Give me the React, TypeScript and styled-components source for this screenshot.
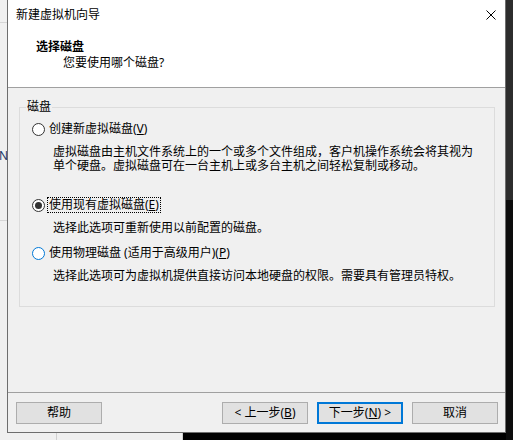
import styled, { createGlobalStyle } from 'styled-components';

const GlobalStyle = createGlobalStyle`
  html, body {
    margin: 0;
    padding: 0;
    background: #000;
  }
  body {
    font-family: "Noto Sans", "Noto Sans CJK SC", sans-serif;
    font-size: 12px;
    color: #000;
  }
`;

const Desktop = styled.div`
  width: 513px;
  height: 440px;
  overflow: hidden;
  display: grid;
  grid-template-columns: 7px 499px 7px;
  grid-template-rows: 433px 7px;
`;

const LeftStrip = styled.div`
  display: flex;
  flex-direction: column;
  background: #f0f0f0;
  overflow: hidden;
`;

const StripCell = styled.div<{ $h: number }>`
  height: ${({ $h }) => $h}px;
  flex-shrink: 0;
  border-bottom: 1px solid #d6d6d6;
  box-sizing: border-box;
`;

const BehindGlyph = styled.div`
  margin-top: 126px;
  margin-left: -1px;
  font-size: 12px;
  line-height: 14px;
  color: #1c3766;
`;

const RightStrip = styled.div`
  grid-row: 1 / 3;
  grid-column: 3;
  display: flex;
  flex-direction: column;
  background: #0c0c0c;
`;

const RightTop = styled.div`
  height: 200px;
  background: #2d2d2d;
`;

const BottomStrip = styled.div`
  grid-column: 1 / 3;
  display: flex;
  background: #000;
`;

const BottomLight = styled.div<{ $w: number }>`
  width: ${({ $w }) => $w}px;
  background: #f0f0f0;
  border-right: 1px solid #d0d0d0;
  box-sizing: border-box;
`;

const Window = styled.div`
  display: flex;
  flex-direction: column;
  border: 1px solid #6e6e6e;
  border-top: none;
  background: #f0f0f0;
  box-sizing: border-box;
`;

const Header = styled.div`
  background: #fff;
  border-bottom: 1px solid #a0a0a0;
  height: 88px;
  box-sizing: border-box;
  display: flex;
  flex-direction: column;
`;

const TitleBar = styled.div`
  height: 30px;
  display: flex;
  align-items: center;
  justify-content: space-between;
  padding: 0 9px 0 8px;
`;

const TitleText = styled.span`
  line-height: 14px;
`;

const CloseIcon = () => (
  <svg width="10" height="10" viewBox="0 0 10 10">
    <path d="M0.5 0.5L9.5 9.5M9.5 0.5L0.5 9.5" stroke="#000" strokeWidth="1" fill="none" />
  </svg>
);

const PageTitle = styled.div`
  margin: 9px 0 0 28px;
  font-weight: 700;
  line-height: 16px;
`;

const PageSubtitle = styled.div`
  margin: 0 0 0 55px;
  line-height: 16px;
`;

const Body = styled.div`
  height: 305px;
  box-sizing: border-box;
  border-bottom: 1px solid #a0a0a0;
  padding-top: 12px;
`;

const GroupBox = styled.fieldset`
  margin: 0 10px 0 11px;
  padding: 8px 12px 23px 12px;
  border: 1px solid #dcdcdc;
  min-width: 0;
`;

const Legend = styled.legend`
  padding: 0 1px;
  margin-left: -6px;
  line-height: 14px;
`;

const Option = styled.div<{ $top: number }>`
  margin-top: ${({ $top }) => $top}px;
`;

const RadioRow = styled.div`
  display: flex;
  align-items: center;
  gap: 3px;
  height: 14px;
`;

const Radio = styled.span<{ $checked?: boolean; $hot?: boolean }>`
  width: 13px;
  height: 13px;
  box-sizing: border-box;
  border-radius: 50%;
  border: 1px solid ${({ $hot }) => ($hot ? '#0078d7' : '#333')};
  background: #fff;
  display: flex;
  align-items: center;
  justify-content: center;
  flex-shrink: 0;

  &::after {
    content: '';
    display: ${({ $checked }) => ($checked ? 'block' : 'none')};
    width: 7px;
    height: 7px;
    border-radius: 50%;
    background: #333;
  }
`;

const Label = styled.span<{ $focused?: boolean }>`
  line-height: 14px;
  padding: 0 1px;
  margin-left: -1px;
  border: 1px dotted ${({ $focused }) => ($focused ? '#000' : 'transparent')};
`;

const Mnemonic = styled.span`
  text-decoration: underline;
  text-underline-offset: 1px;
`;

const Description = styled.div`
  margin: 9px 0 0 21px;
  line-height: 14px;
`;

const Footer = styled.div`
  flex: 1;
  display: flex;
  align-items: flex-start;
  padding: 9px 7px 0 8px;
  gap: 9px;
`;

const Button = styled.button<{ $default?: boolean }>`
  width: 86px;
  height: 22px;
  box-sizing: border-box;
  padding: 0;
  font: inherit;
  line-height: 14px;
  color: #000;
  background: #e1e1e1;
  border: ${({ $default }) => ($default ? '2px solid #0078d7' : '1px solid #adadad')};
`;

const Spacer = styled.div`
  flex: 1;
`;

export default function App() {
  return (
    <>
      <GlobalStyle />
      <Desktop>
        <LeftStrip>
          <StripCell $h={23} />
          <StripCell $h={198}>
            <BehindGlyph>N</BehindGlyph>
          </StripCell>
        </LeftStrip>
        <Window>
          <Header>
            <TitleBar>
              <TitleText>新建虚拟机向导</TitleText>
              <CloseIcon />
            </TitleBar>
            <PageTitle>选择磁盘</PageTitle>
            <PageSubtitle>您要使用哪个磁盘?</PageSubtitle>
          </Header>
          <Body>
            <GroupBox>
              <Legend>磁盘</Legend>
              <Option $top={0}>
                <RadioRow>
                  <Radio />
                  <Label>
                    创建新虚拟磁盘(<Mnemonic>V</Mnemonic>)
                  </Label>
                </RadioRow>
                <Description>
                  虚拟磁盘由主机文件系统上的一个或多个文件组成，客户机操作系统会将其视为
                  <br />
                  单个硬盘。虚拟磁盘可在一台主机上或多台主机之间轻松复制或移动。
                </Description>
              </Option>
              <Option $top={25}>
                <RadioRow>
                  <Radio $checked />
                  <Label $focused>
                    使用现有虚拟磁盘(<Mnemonic>E</Mnemonic>)
                  </Label>
                </RadioRow>
                <Description>选择此选项可重新使用以前配置的磁盘。</Description>
              </Option>
              <Option $top={11}>
                <RadioRow>
                  <Radio $hot />
                  <Label>
                    使用物理磁盘 (适用于高级用户)(<Mnemonic>P</Mnemonic>)
                  </Label>
                </RadioRow>
                <Description>选择此选项可为虚拟机提供直接访问本地硬盘的权限。需要具有管理员特权。</Description>
              </Option>
            </GroupBox>
          </Body>
          <Footer>
            <Button>帮助</Button>
            <Spacer />
            <Button>
              &lt; 上一步(<Mnemonic>B</Mnemonic>)
            </Button>
            <Button $default>
              下一步(<Mnemonic>N</Mnemonic>) &gt;
            </Button>
            <Button>取消</Button>
          </Footer>
        </Window>
        <RightStrip>
          <RightTop />
        </RightStrip>
        <BottomStrip>
          <BottomLight $w={57} />
          <BottomLight $w={126} />
        </BottomStrip>
      </Desktop>
    </>
  );
}
